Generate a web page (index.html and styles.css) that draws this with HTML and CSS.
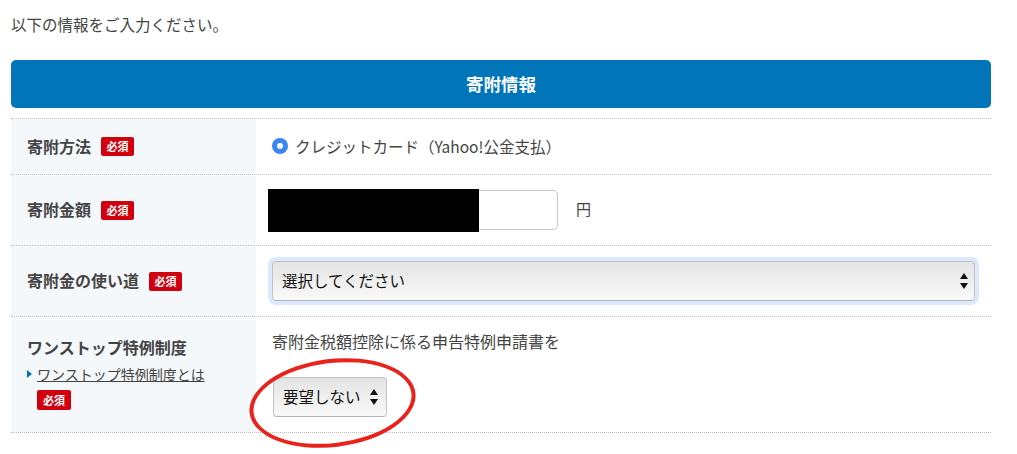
FILE: index.html
```html
<!DOCTYPE html>
<html lang="ja">
    <head>
        <meta charset="utf-8" />
        <title>寄附情報</title>
        <link rel="stylesheet" href="styles.css">
    </head>
    <body>
        <div class="page">
            <p class="lead">以下の情報をご入力ください。</p>
            <h2 class="section-title">寄附情報</h2>

            <div class="form-table">
                <div class="form-row row-method">
                    <div class="form-label">
                        <span class="label-text">寄附方法</span>
                        <span class="required">必須</span>
                    </div>
                    <div class="form-field">
                        <label class="radio"><span class="radio-mark"></span>クレジットカード（Yahoo!公金支払）</label>
                    </div>
                </div>

                <div class="form-row row-amount">
                    <div class="form-label">
                        <span class="label-text">寄附金額</span>
                        <span class="required">必須</span>
                    </div>
                    <div class="form-field">
                        <div class="amount-box">
                            <input class="amount-input" type="text" value="">
                            <span class="redact"></span>
                        </div>
                        <span class="unit">円</span>
                    </div>
                </div>

                <div class="form-row row-use">
                    <div class="form-label">
                        <span class="label-text">寄附金の使い道</span>
                        <span class="required">必須</span>
                    </div>
                    <div class="form-field">
                        <div class="select select-wide is-focus">
                            <span class="select-text">選択してください</span>
                            <svg class="select-arrows" width="8" height="16" viewBox="0 0 8 16">
                                <path d="M4 0 L8 6 L0 6 Z M0 10 L8 10 L4 16 Z" fill="#111"/>
                            </svg>
                        </div>
                    </div>
                </div>

                <div class="form-row row-onestop">
                    <div class="form-label stacked">
                        <span class="label-text">ワンストップ特例制度</span>
                        <a class="help-link" href="#">ワンストップ特例制度とは</a>
                        <span class="required">必須</span>
                    </div>
                    <div class="form-field stacked">
                        <p class="note">寄附金税額控除に係る申告特例申請書を</p>
                        <div class="select select-small">
                            <span class="select-text">要望しない</span>
                            <svg class="select-arrows" width="8" height="16" viewBox="0 0 8 16">
                                <path d="M4 0 L8 6 L0 6 Z M0 10 L8 10 L4 16 Z" fill="#111"/>
                            </svg>
                            <span class="mark-circle"></span>
                        </div>
                    </div>
                </div>
            </div>
        </div>
    </body>
</html>
```

FILE: styles.css
```css
body {
    margin: 0;
    background: #ffffff;
    color: #444444;
    font-family: "Noto Sans CJK JP", "Liberation Sans", sans-serif;
}
.page {
    width: 980px;
    min-height: 454px;
    margin-left: 11px;
}
.lead {
    margin: 0;
    padding-top: 12px;
    font-size: 15.5px;
    line-height: 24px;
    color: #444444;
}
.section-title {
    margin: 24px 0 10px;
    height: 48px;
    line-height: 48px;
    background: #0075ba;
    border-radius: 5px;
    color: #ffffff;
    font-size: 17.5px;
    font-weight: 700;
    text-align: center;
}
.form-table {
    border-top: 1px dotted #bdbdbd;
}
.form-row {
    display: flex;
    border-bottom: 1px dotted #bdbdbd;
}
.form-label {
    width: 245px;
    box-sizing: border-box;
    padding: 0 16px;
    background: #f4f8fb;
    display: flex;
    align-items: center;
}
.form-field {
    flex: 1;
    padding-left: 16px;
    display: flex;
    align-items: center;
    font-size: 15.5px;
    color: #444444;
}
.row-method { height: 55px; }
.row-amount { height: 70px; }
.row-use { height: 70px; }
.row-onestop { height: 115px; }

.label-text {
    font-size: 16px;
    font-weight: 700;
    color: #444444;
    line-height: 24px;
    margin-top: -2px;
}
.required {
    display: inline-block;
    margin-left: 10px;
    width: 33px;
    height: 19px;
    line-height: 19px;
    background: #d0000f;
    border-radius: 2px;
    color: #ffffff;
    font-size: 11px;
    font-weight: 700;
    text-align: center;
}

.radio {
    display: flex;
    align-items: center;
    line-height: 24px;
    margin-top: -2px;
}
.radio-mark {
    width: 16px;
    height: 16px;
    border-radius: 50%;
    background: #3b86f0;
    margin-right: 7px;
    position: relative;
}
.radio-mark::after {
    content: "";
    position: absolute;
    left: 5px;
    top: 5px;
    width: 6px;
    height: 6px;
    border-radius: 50%;
    background: #ffffff;
}

.amount-box {
    position: relative;
    margin-left: -4px;
}
.amount-input {
    display: block;
    width: 290px;
    height: 40px;
    box-sizing: border-box;
    border: 1px solid #c8c8c8;
    border-radius: 5px;
    background: #ffffff;
}
.redact {
    position: absolute;
    left: 0;
    top: -1px;
    width: 211px;
    height: 43px;
    background: #000000;
}
.unit {
    margin-left: 18px;
    font-size: 15px;
    margin-top: -4px;
}

.select {
    position: relative;
    height: 40px;
    box-sizing: border-box;
    border: 1px solid #c2c2c2;
    border-bottom-color: #b4b4b4;
    border-radius: 4px;
    background: linear-gradient(#e4e4e4, #f9f9f9);
    display: flex;
    align-items: center;
    padding-left: 9px;
    color: #111111;
    font-size: 15.5px;
}
.select-text {
    margin-top: -3px;
}
.select-wide {
    width: 703px;
}
.select.is-focus {
    box-shadow: 0 0 0 4px #dce8fb;
}
.select-small {
    width: 114px;
    margin-left: 1px;
}
.select-arrows {
    position: absolute;
    right: 6px;
    top: 11px;
}
.select-small .select-arrows {
    right: 8px;
}

.form-label.stacked {
    flex-direction: column;
    align-items: flex-start;
    justify-content: flex-start;
    padding-top: 20px;
}
.help-link {
    margin-top: 3px;
    padding-left: 10px;
    position: relative;
    font-size: 14px;
    line-height: 24px;
    color: #444444;
}
.help-link::before {
    content: "";
    position: absolute;
    left: 0;
    top: 8px;
    border-left: 5px solid #0075ba;
    border-top: 4px solid transparent;
    border-bottom: 4px solid transparent;
}
.form-label.stacked .required {
    margin: 4px 0 0 10px;
    width: 34px;
    height: 20px;
    line-height: 20px;
}
.form-field.stacked {
    flex-direction: column;
    align-items: flex-start;
    justify-content: flex-start;
    padding-top: 12px;
}
.note {
    margin: 0 0 24px;
    font-size: 16px;
    line-height: 24px;
}
.mark-circle {
    position: absolute;
    left: -25px;
    top: -19px;
    width: 167px;
    height: 88px;
    box-sizing: border-box;
    border: 4px solid #e8231b;
    border-radius: 50%;
    transform: rotate(-7deg);
}
```
